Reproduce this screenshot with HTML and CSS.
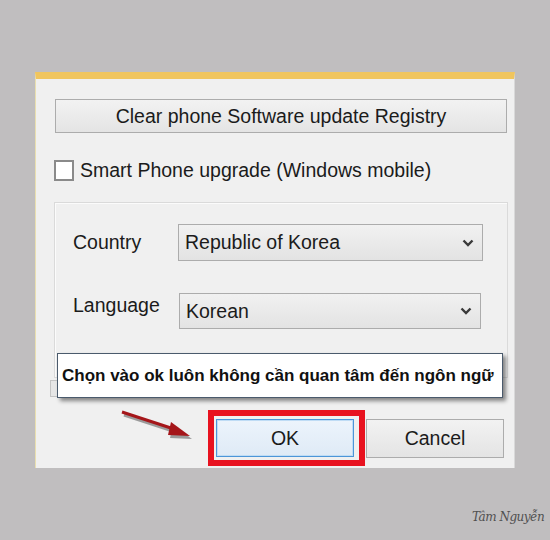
FILE: index.html
```html
<!DOCTYPE html>
<html>
<head>
<meta charset="utf-8">
<link rel="stylesheet" href="styles.css">
</head>
<body>
<div class="dialog">
  <button class="btn clear-btn">Clear phone Software update Registry</button>
  <label class="check-row"><span class="checkbox"></span><span>Smart Phone upgrade (Windows mobile)</span></label>
  <div class="group">
    <div class="field-row">
      <span class="field-label">Country</span>
      <div class="combo"><span>Republic of Korea</span><svg class="chev" width="12" height="8" viewBox="0 0 12 8"><polyline points="1.5,1.5 6,6 10.5,1.5" fill="none" stroke="#3a3a3a" stroke-width="2.4"/></svg></div>
    </div>
    <div class="field-row">
      <span class="field-label">Language</span>
      <div class="combo"><span>Korean</span><svg class="chev" width="12" height="8" viewBox="0 0 12 8"><polyline points="1.5,1.5 6,6 10.5,1.5" fill="none" stroke="#3a3a3a" stroke-width="2.4"/></svg></div>
    </div>
  </div>
  <div class="hidden-row"><span class="small-btn"></span></div>
  <div class="actions">
    <div class="highlight"><button class="btn ok-btn">OK</button></div>
    <button class="btn cancel-btn">Cancel</button>
  </div>
  <div class="tooltip">Chọn vào ok luôn không cần quan tâm đến ngôn ngữ</div>
  <svg class="arrow" width="90" height="50" viewBox="0 0 90 50">
    <g transform="translate(2,3)" opacity="0.35"><line x1="7" y1="9" x2="62" y2="27" stroke="#000" stroke-width="3"/><polygon points="75,33 56,19 53,32" fill="#000"/></g>
    <line x1="7" y1="9" x2="62" y2="27" stroke="#a5161a" stroke-width="3"/>
    <polygon points="75,33 56,19 53,32" fill="#a5161a"/>
  </svg>
</div>
<div class="signature">Tâm Nguyễn</div>
</body>
</html>
```
FILE: styles.css
```css
html, body {
  margin: 0;
  padding: 0;
}
body {
  width: 550px;
  height: 540px;
  background: #c0bebf;
  font-family: "Liberation Sans", Arial, sans-serif;
  color: #1b1b1b;
  position: relative;
  overflow: hidden;
}
.dialog {
  position: relative;
  box-sizing: border-box;
  margin: 72px 0 0 35px;
  width: 480px;
  height: 396px;
  background: #f0f0f0;
  border-top: 7px solid #f0c55e;
  border-left: 1px solid #e9dfb0;
  border-right: 1px solid #d9d9d9;
  padding: 20px 0 0 19px;
  display: flex;
  flex-direction: column;
}
.btn {
  font-family: "Liberation Sans", Arial, sans-serif;
  font-size: 19.5px;
  color: #1b1b1b;
  background: linear-gradient(#f2f2f2, #e4e4e4);
  border: 1px solid #acacac;
  box-sizing: border-box;
  padding: 0;
  margin: 0;
}
.clear-btn {
  width: 452px;
  height: 34px;
  line-height: 30px;
}
.check-row {
  display: flex;
  align-items: center;
  gap: 6px;
  margin-top: 27px;
  margin-left: -1px;
  font-size: 19.5px;
  height: 21px;
}
.checkbox {
  width: 20px;
  height: 21px;
  box-sizing: border-box;
  border: 2px solid #8a8a8a;
  background: #fff;
}
.group {
  margin-top: 21px;
  margin-left: -1px;
  width: 454px;
  height: 176px;
  box-sizing: border-box;
  border: 1px solid #dadada;
  box-shadow: inset 1px 1px 0 #fbfbfb;
  padding: 21px 0 0 18px;
  display: flex;
  flex-direction: column;
  gap: 32px;
}
.field-row {
  display: flex;
  align-items: center;
}
.field-label {
  width: 105px;
  font-size: 19.5px;
}
.field-row:nth-child(2) .field-label {
  margin-top: -12px;
}
.combo {
  width: 305px;
  height: 37px;
  box-sizing: border-box;
  border: 1px solid #acacac;
  background: linear-gradient(#f1f1f1, #e3e3e3);
  display: flex;
  align-items: center;
  justify-content: space-between;
  padding: 0 8px 0 6px;
  font-size: 19.5px;
}
.field-row:nth-child(2) .combo {
  width: 302px;
  height: 36px;
  margin-left: 1px;
}
.hidden-row {
  height: 17px;
  margin-top: 2px;
}
.small-btn {
  display: block;
  margin-left: -5px;
  width: 80px;
  height: 17px;
  box-sizing: border-box;
  border: 1px solid #c4c4c4;
  background: #e6e6e6;
}
.actions {
  margin-top: 13px;
  display: flex;
  align-items: flex-start;
  padding-left: 153px;
}
.highlight {
  border: 6px solid #e8121f;
  padding: 3px 3px 2px 2px;
  width: 157px;
  height: 56px;
  box-sizing: border-box;
}
.ok-btn {
  width: 138px;
  height: 38px;
  border: 1px solid #4d95d8;
  box-shadow: inset 0 0 0 1px #bfdcf5;
  background: linear-gradient(#ecf4fc, #dfeaf6);
}
.cancel-btn {
  width: 138px;
  height: 39px;
  margin-top: 9px;
  margin-left: 1px;
}
.tooltip {
  position: absolute;
  left: 21px;
  top: 274px;
  width: 446px;
  height: 45px;
  box-sizing: border-box;
  background: #fff;
  border: 1px solid #4a5a6c;
  box-shadow: 3px 3px 4px rgba(0, 0, 0, 0.45);
  font-weight: bold;
  font-size: 17px;
  line-height: 43px;
  padding-left: 4px;
  white-space: nowrap;
  color: #111;
}
.arrow {
  position: absolute;
  left: 79px;
  top: 324px;
}
.signature {
  position: absolute;
  left: 472px;
  top: 510px;
  font-family: "DejaVu Serif", serif;
  font-style: italic;
  font-size: 12px;
  letter-spacing: -0.5px;
  color: #505050;
}
```
